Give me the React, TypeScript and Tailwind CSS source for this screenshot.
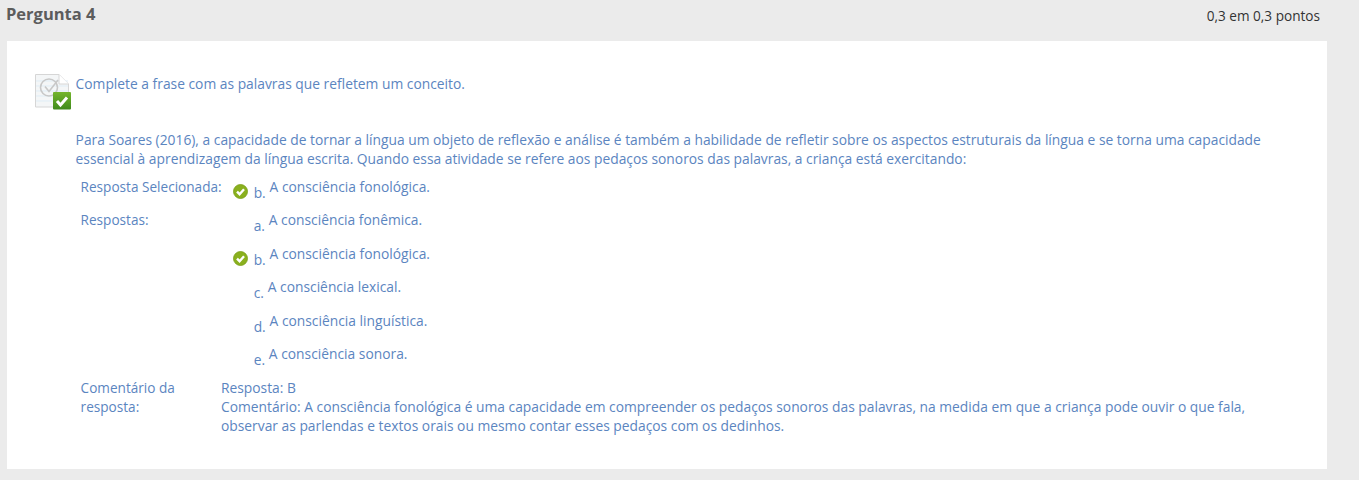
import React from "react";

const TEXT_BLUE = "text-[#5b85bf]";

const CheckBadge = () => (
  <svg width="15" height="15" viewBox="0 0 15 15" className="shrink-0">
    <circle cx="7.5" cy="7.5" r="7" fill="#8ab01e" stroke="#7a9f17" strokeWidth="0.8" />
    <path d="M4 7.6 L6.6 10.2 L11 5.2" fill="none" stroke="#fff" strokeWidth="2.4" />
  </svg>
);

const QuestionIcon = () => (
  <svg width="38" height="38" viewBox="0 0 38 38" className="shrink-0">
    <defs>
      <linearGradient id="badge" x1="0" y1="0" x2="0" y2="1">
        <stop offset="0" stopColor="#74b52c" />
        <stop offset="1" stopColor="#3f8a1c" />
      </linearGradient>
    </defs>
    <path d="M1.5 0.5 H25 L34.5 10 V33 H1.5 Z" fill="#f4f6f7" stroke="#d6d6d6" strokeWidth="1" />
    <path d="M2 7 H34 M2 12 H34 M2 17 H34 M2 22 H34 M2 27 H34" stroke="#dfedf6" strokeWidth="1" />
    <path d="M25 0.5 V10 H34.5" fill="#fff" stroke="#d6d6d6" strokeWidth="1" />
    <circle cx="15" cy="13.5" r="8.5" fill="none" stroke="#c8c8c8" strokeWidth="1.6" />
    <path d="M11 12.5 L15 17.5 L24 6" fill="none" stroke="#c8c8c8" strokeWidth="1.6" />
    <rect x="19" y="18" width="18" height="17.5" rx="1" fill="url(#badge)" />
    <path d="M23 27 L26.5 31 L33 23.5" fill="none" stroke="#fff" strokeWidth="3" />
  </svg>
);

const answers = [
  { letter: "a.", text: "A consciência fonêmica.", correct: false },
  { letter: "b.", text: "A consciência fonológica.", correct: true },
  { letter: "c.", text: "A consciência lexical.", correct: false },
  { letter: "d.", text: "A consciência linguística.", correct: false },
  { letter: "e.", text: "A consciência sonora.", correct: false },
];

const AnswerLine = ({ letter, text, correct }: { letter: string; text: string; correct: boolean }) => (
  <div className="flex h-[33.5px] items-start">
    <div className="flex w-[32.7px] shrink-0 items-center justify-end pt-[6px] pr-[5.7px]">
      {correct && <CheckBadge />}
    </div>
    <span className="pt-[6px]">{letter}</span>
    <span className="pl-[3.8px]">{text}</span>
  </div>
);

export default function App() {
  return (
    <div className="h-[480px] overflow-hidden bg-[#ebebeb] font-['Open_Sans',sans-serif] text-[13.82px] leading-[18.7px]">
      <div className="mr-[39px] flex h-[41px] items-start justify-between pl-[6px]">
        <h3 className="pt-[3px] text-[16.5px] leading-[22px] font-bold text-[#5c5c5c]">Pergunta 4</h3>
        <span className="pt-[7px] text-[13.6px] leading-[18px] text-[#333]">0,3 em 0,3 pontos</span>
      </div>

      <div className={`mr-[32px] ml-[6.6px] h-[428px] bg-white pt-[33px] pr-[30px] pl-[27px] ${TEXT_BLUE}`}>
        <div className="flex items-start">
          <QuestionIcon />
          <p className="pt-[1px] pl-[4px]">Complete a frase com as palavras que refletem um conceito.</p>
        </div>

        <p className="mt-[19px] pl-[42px]">
          Para Soares (2016), a capacidade de tornar a língua um objeto de reflexão e análise é também a habilidade de refletir sobre os aspectos estruturais da língua e se torna uma capacidade essencial à aprendizagem da língua escrita. Quando essa atividade se refere aos pedaços sonoros das palavras, a criança está exercitando:
        </p>

        <div className="mt-[9.4px] grid grid-cols-[140.4px_1fr] pl-[47px]">
          <div className="text-[13.6px] whitespace-nowrap">Resposta Selecionada:</div>
          <AnswerLine letter="b." text="A consciência fonológica." correct />

          <div className="text-[13.6px]">Respostas:</div>
          <div>
            {answers.map((a) => (
              <AnswerLine key={a.letter} {...a} />
            ))}
          </div>

          <div className="w-[110px] pt-[0.6px] text-[13.6px]">Comentário da resposta:</div>
          <div className="pt-[0.6px]">
            Resposta: B
            <br />
            Comentário: A consciência fonológica é uma capacidade em compreender os pedaços sonoros das palavras, na medida em que a criança pode ouvir o que fala, observar as parlendas e textos orais ou mesmo contar esses pedaços com os dedinhos.
          </div>
        </div>
      </div>
    </div>
  );
}
